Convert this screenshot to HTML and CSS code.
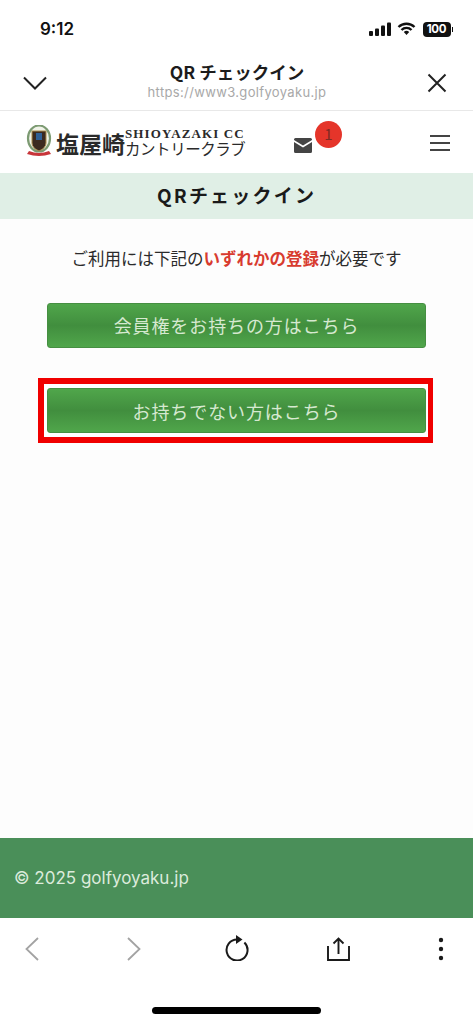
FILE: index.html
```html
<!DOCTYPE html>
<html lang="ja">
<head>
<meta charset="utf-8">
<title>QRチェックイン</title>
<link rel="stylesheet" href="styles.css">
</head>
<body>
<div class="screen">
  <div class="status">
    <span class="time">9:12</span>
    <div class="status-icons">
      <svg width="22" height="14" viewBox="0 0 22 14"><g fill="#111"><rect x="0" y="9" width="4" height="5" rx="1"/><rect x="6" y="6.500" width="4" height="7.500" rx="1"/><rect x="12" y="3.500" width="4" height="10.500" rx="1"/><rect x="18" y="0.500" width="4" height="13.500" rx="1"/></g></svg>
      <svg class="wifi" width="19" height="14" viewBox="0 0 19 14"><path d="M1.500 5 A11.500 11.500 0 0 1 17.500 5 M4.500 8 A7 7 0 0 1 14.500 8" fill="none" stroke="#111" stroke-width="2.400"/><path d="M6.800 10 A4 4 0 0 1 12.200 10 L9.500 13 Z" fill="#111"/></svg>
      <div class="battery"><span class="battery-num">100</span></div><span class="battery-tip"></span>
    </div>
  </div>
  <div class="browser-bar">
    <svg class="bar-icon" width="24" height="14" viewBox="0 0 24 14"><path d="M1 1.500 L12 12.500 L23 1.500" fill="none" stroke="#222" stroke-width="2"/></svg>
    <div class="bar-title">
      <div class="bar-name">QR チェックイン</div>
      <div class="bar-url">https://www3.golfyoyaku.jp</div>
    </div>
    <svg class="bar-icon" width="20" height="20" viewBox="0 0 20 20"><path d="M1.500 1.500 L18.500 18.500 M18.500 1.500 L1.500 18.500" fill="none" stroke="#222" stroke-width="2"/></svg>
  </div>
  <header class="site-header">
    <div class="logo">
      <svg class="crest" width="26" height="32" viewBox="0 0 26 32">
        <ellipse cx="13" cy="13.500" rx="11" ry="13" fill="#f0f3e8" stroke="#7c9a72" stroke-width="2.200"/>
        <path d="M6 6 H20 V18 Q20 23 13 26 Q6 23 6 18 Z" fill="#3b2a20" stroke="#a98a4a" stroke-width="1"/>
        <rect x="10" y="8" width="6" height="7" fill="#2f5f95"/>
        <path d="M3 26 Q13 30 23 26 L25 29 Q13 33 1 29 Z" fill="#c8353a"/>
      </svg>
      <span class="logo-kanji">塩屋崎</span>
      <div class="logo-side">
        <span class="logo-en">SHIOYAZAKI CC</span>
        <span class="logo-kana">カントリークラブ</span>
      </div>
    </div>
    <div class="mail">
      <svg width="18" height="15" viewBox="0 0 18 15"><path d="M0 1.500 Q0 0 1.500 0 H16.500 Q18 0 18 1.500 V2 L9 7.500 L0 2 Z" fill="#444"/><path d="M0 4 L9 9.500 L18 4 V13.500 Q18 15 16.500 15 H1.500 Q0 15 0 13.500 Z" fill="#444"/></svg>
      <span class="badge">1</span>
    </div>
    <div class="menu"><span></span><span></span><span></span></div>
  </header>
  <h1 class="page-title">QRチェックイン</h1>
  <main class="content">
    <p class="notice">ご利用には下記の<strong>いずれかの登録</strong>が必要です</p>
    <a class="btn">会員権をお持ちの方はこちら</a>
    <div class="highlight"><a class="btn btn-second">お持ちでない方はこちら</a></div>
  </main>
  <footer class="footer">© 2025 golfyoyaku.jp</footer>
  <nav class="toolbar">
    <div class="tools">
      <span class="tool"><svg width="14" height="24" viewBox="0 0 14 24"><path d="M13 1 L1.500 12 L13 23" fill="none" stroke="#a3a3a3" stroke-width="1.800"/></svg></span>
      <span class="tool"><svg width="14" height="24" viewBox="0 0 14 24"><path d="M1 1 L12.500 12 L1 23" fill="none" stroke="#a3a3a3" stroke-width="1.800"/></svg></span>
      <span class="tool"><svg class="reload" width="26" height="26" viewBox="0 0 26 26"><path d="M20.400 7.500 A10.500 10.500 0 1 1 13 4.500" fill="none" stroke="#1a1a1a" stroke-width="2"/><path d="M12 0 L18.500 4.500 L12 9 Z" fill="#1a1a1a"/></svg></span>
      <span class="tool"><svg width="23" height="24" viewBox="0 0 23 24"><path d="M11.500 2 V17 M6.500 6.500 L11.500 1.500 L16.500 6.500" fill="none" stroke="#1a1a1a" stroke-width="1.900"/><path d="M1 9 V23 H22 V9" fill="none" stroke="#1a1a1a" stroke-width="1.900"/></svg></span>
      <span class="tool"><svg width="6" height="24" viewBox="0 0 6 24"><g fill="#1a1a1a"><circle cx="3" cy="3" r="2.200"/><circle cx="3" cy="12" r="2.200"/><circle cx="3" cy="21" r="2.200"/></g></svg></span>
    </div>
    <div class="home-bar"></div>
  </nav>
</div>
</body>
</html>
```
FILE: styles.css
```css
* { box-sizing: border-box; }
html, body { margin: 0; padding: 0; }
body {
  background: #fff;
  font-family: "Noto Sans CJK JP", "Noto Sans", sans-serif;
  color: #222;
}
.screen {
  width: 473px;
  height: 1024px;
  display: flex;
  flex-direction: column;
  overflow: hidden;
}
.status {
  height: 52px;
  flex: none;
  padding: 14px 20px 0 40px;
  display: flex;
  justify-content: space-between;
  align-items: flex-start;
}
.time {
  font-family: Inter, "Liberation Sans", sans-serif;
  font-size: 17px;
  line-height: 30px;
  font-weight: 600;
  color: #111;
}
.status-icons {
  display: flex;
  align-items: center;
  gap: 6px;
  height: 30px;
}
.wifi { margin-right: 1px; }
.battery {
  width: 28px;
  height: 15px;
  background: #111;
  border-radius: 4px;
  display: flex;
  align-items: center;
  justify-content: center;
}
.battery-num {
  font-family: Inter, "Liberation Sans", sans-serif;
  font-size: 11.500px;
  line-height: 15px;
  font-weight: 700;
  color: #fff;
  letter-spacing: -0.3px;
}
.battery-tip {
  width: 1.500px;
  height: 5px;
  background: #111;
  margin-left: -5px;
}
.browser-bar {
  height: 59px;
  flex: none;
  border-bottom: 1px solid #e8e8e8;
  padding: 0 26px 0 23px;
  display: flex;
  align-items: center;
  justify-content: space-between;
}
.bar-icon { margin-top: 4px; }
.bar-title { text-align: center; margin-top: 0; }
.bar-name {
  font-size: 17.500px;
  line-height: 23px;
  font-weight: 700;
  color: #1c1c1c;
}
.bar-url {
  font-family: Inter, "Liberation Sans", sans-serif;
  font-size: 13px;
  line-height: 19px;
  color: #a8a8a8;
  letter-spacing: 0.35px;
}
.site-header {
  height: 62px;
  flex: none;
  padding: 0 23px 0 26px;
  display: flex;
  align-items: center;
}
.logo {
  display: flex;
  align-items: center;
  width: 268px;
  color: #2a2a2a;
}
.crest { margin-right: 4px; flex: none; margin-top: -2px; }
.logo-kanji {
  font-size: 23px;
  line-height: 30px;
  font-weight: 700;
  margin-top: 2px;
}
.logo-side {
  display: flex;
  flex-direction: column;
  margin-top: 2px;
}
.logo-en {
  font-family: "Liberation Serif", serif;
  font-size: 13px;
  line-height: 10px;
  font-weight: 700;
  white-space: nowrap;
  letter-spacing: 1.100px;
}
.logo-kana {
  font-size: 15.500px;
  line-height: 18px;
  font-weight: 400;
  white-space: nowrap;
  letter-spacing: -0.450px;
}
.mail {
  position: relative;
  display: flex;
  width: 18px;
  margin-top: 7px;
}
.badge {
  position: absolute;
  left: 21px;
  top: -17px;
  width: 27px;
  height: 27px;
  border-radius: 50%;
  background: #e5352a;
  color: #7d2a24;
  font-size: 15px;
  line-height: 25px;
  text-align: center;
}
.menu {
  margin-left: auto;
  width: 20px;
  display: flex;
  flex-direction: column;
  gap: 5px;
  margin-top: 1px;
}
.menu span {
  height: 2px;
  background: #444;
}
.page-title {
  height: 46px;
  flex: none;
  margin: 0;
  background: #e0efe6;
  text-align: center;
  font-size: 19px;
  line-height: 44px;
  font-weight: 700;
  letter-spacing: 2.200px;
  color: #1a1a1a;
}
.content {
  flex: 1;
  padding: 26px 47px 0;
  display: flex;
  flex-direction: column;
  background: #fdfdfd;
}
.notice {
  margin: 0 -20px 32px;
  font-size: 16.500px;
  line-height: 26px;
  text-align: center;
  color: #2b2b2b;
  white-space: nowrap;
}
.notice strong { color: #d83b2f; font-weight: 700; }
.btn {
  display: block;
  height: 45px;
  border-radius: 3px;
  border: 1px solid #468f42;
  background: linear-gradient(#50a64b, #418e3e 50%, #50a64b);
  color: #d6e9d0;
  font-size: 18px;
  line-height: 43px;
  letter-spacing: 0.900px;
  text-align: center;
}
.btn-second { line-height: 44px; }
.highlight {
  margin: 30px -7px 0 -9px;
  border-style: solid;
  border-color: #f00000;
  border-width: 6px 5px 6px 6px;
  background: #fff;
  padding: 4px 2px 4px 3px;
}
.footer {
  height: 80px;
  flex: none;
  background: #4a8f59;
  color: #dcebdc;
  font-family: Inter, "Liberation Sans", sans-serif;
  font-size: 17px;
  line-height: 80px;
  padding-left: 14px;
}
.toolbar {
  height: 106px;
  flex: none;
  background: #fff;
  display: flex;
  flex-direction: column;
}
.tools {
  padding: 0 19px;
  display: flex;
  justify-content: space-between;
  align-items: center;
  height: 62px;
}
.tool {
  width: 26px;
  display: flex;
  justify-content: center;
}
.reload { margin-bottom: 2px; }
.home-bar {
  width: 169px;
  height: 7px;
  border-radius: 4px;
  background: #000;
  margin: 27px auto 0;
}
```
